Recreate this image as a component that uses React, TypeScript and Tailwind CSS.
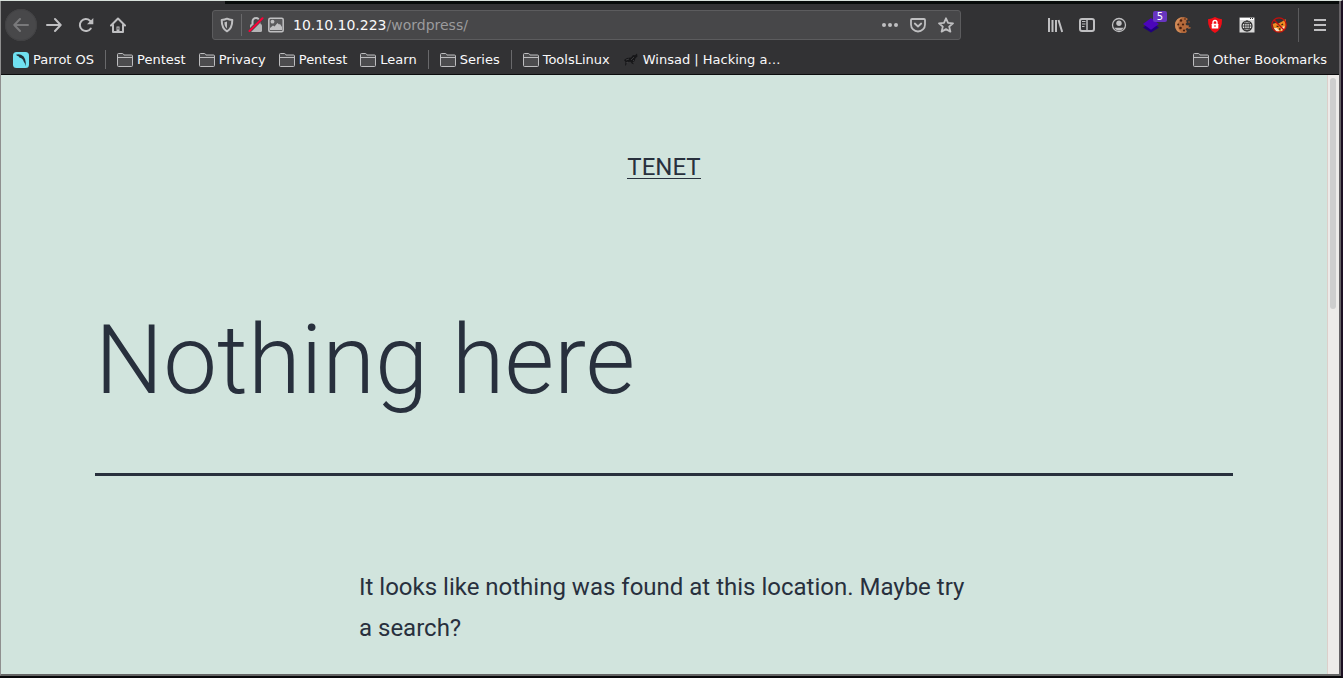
import React from "react";

const stroke = {
  fill: "none",
  stroke: "#bfbfc1",
  strokeWidth: 2,
  strokeLinecap: "round" as const,
  strokeLinejoin: "round" as const,
};

function Icon({ children }: { children: React.ReactNode }) {
  return (
    <svg viewBox="0 0 16 16" className="block size-4 shrink-0" aria-hidden="true">
      {children}
    </svg>
  );
}

function ToolButton({ label, className = "", children }: { label: string; className?: string; children: React.ReactNode }) {
  return (
    <button type="button" aria-label={label} className={`relative flex size-8 shrink-0 items-center justify-center ${className}`}>
      {children}
    </button>
  );
}

function FolderIcon() {
  return (
    <Icon>
      <path
        d="M.5 2.500q0-1 1-1h4q.7 0 1 .7l.4.8h7.600q1 0 1 1v9.500q0 1-1 1H1.500q-1 0-1-1z"
        fill="#4c4c4e"
        stroke="#bdbdbf"
      />
      <path d="M.5 5.500h15" stroke="#bdbdbf" />
    </Icon>
  );
}

function ParrotIcon() {
  return (
    <Icon>
      <rect width="16" height="16" rx="3.500" fill="#6fe0f0" />
      <path
        d="M3 2.800l2.200-.6 2.800.6 2.600 1.700 1.500 2.800.6 3 .1 4-.9-2.800-1.200-2-.7-1.700-2-1.700-1.300-.4-1.200-1.500-1.400-.5z"
        fill="#213038"
      />
    </Icon>
  );
}

function HorseIcon() {
  return (
    <Icon>
      <path d="M1 8l3-2 4-.5 2-2.500 2 .2 2-1.700.5 3-2 1.800-1 3-2 1 1.500 2-2-.5-1.500-2-3 .2L3 13l-1 1 .5-4z" fill="#161618" />
      <path d="M3 8l3-1M8 8l3-3M5 10l-2 1M10 9l1-1" stroke="#4a4a4c" strokeWidth=".7" />
    </Icon>
  );
}

function Bookmark({ label, icon = <FolderIcon /> }: { label: string; icon?: React.ReactNode }) {
  return (
    <a href="#" className="flex items-center gap-1 px-[5px] whitespace-nowrap">
      {icon}
      <span>{label}</span>
    </a>
  );
}

function Separator() {
  return <span className="mx-[3px] h-[19px] w-px bg-[#69696b]" />;
}

function AddressBar() {
  return (
    <div className="mx-[78px] flex h-[30px] min-w-0 flex-1 items-center rounded-[3px] border border-[#5c5c5e] bg-[#474749] px-1.5">
      <button type="button" aria-label="Tracking protection">
        <Icon>
          <path d="M8 1.700c1.900 1 3.700 1.200 5.300 1.300 0 6-1.500 9.300-5.300 11.300C4.200 12.300 2.700 9 2.700 3 4.300 2.900 6.100 2.700 8 1.700z" {...stroke} />
          <path d="M8 4.500v7C6.200 10 5.400 8 5.400 5.200 6.300 5.100 7.200 4.900 8 4.500z" fill="#bfbfc1" />
        </Icon>
      </button>
      <span className="ml-1.5 h-[22px] w-px bg-[#69696b]" />
      <button type="button" aria-label="Connection not secure" className="ml-1.5">
        <Icon>
          <path d="M4.500 7V4.500a3.500 3.500 0 0 1 7 0V7" {...stroke} />
          <rect x="2" y="7" width="12" height="8" rx="1.500" fill="#b4b4b6" />
          <path d="M1 14.500L14.500 1" stroke="#474749" strokeWidth="3.500" />
          <path d="M1.500 14L14.500 1.300" stroke="#ff0039" strokeWidth="2" strokeLinecap="round" />
        </Icon>
      </button>
      <button type="button" aria-label="Image permissions" className="ml-1">
        <Icon>
          <rect x=".8" y="1.300" width="14.400" height="13.400" rx="1.500" fill="#5a5a5c" stroke="#bfbfc1" strokeWidth="1.500" />
          <circle cx="4.500" cy="4.700" r="1.900" fill="#bfbfc1" />
          <path d="M2 13V11l3-2.500 1.500 1L9.500 6l1.500 1.500L12 7l2 3v3z" fill="#bfbfc1" />
        </Icon>
      </button>
      <label className="ml-[9px] flex min-w-0 flex-1 items-center text-sm text-[#9b9b9d]">
        <input
          type="text"
          aria-label="Address"
          defaultValue="10.10.10.223"
          className="field-sizing-content bg-transparent text-[#f9f9fa] outline-none"
        />
        <span>/wordpress/</span>
      </label>
      <div className="flex gap-3">
        <button type="button" aria-label="Page actions">
          <Icon>
            <circle cx="2" cy="8" r="2" fill="#bfbfc1" />
            <circle cx="8" cy="8" r="2" fill="#bfbfc1" />
            <circle cx="14" cy="8" r="2" fill="#bfbfc1" />
          </Icon>
        </button>
        <button type="button" aria-label="Save to Pocket">
          <Icon>
            <path d="M2 2h12q1 0 1 1v4.500a7 7 0 0 1-14 0V3q0-1 1-1zM4.800 6.500L8 9.500l3.200-3" {...stroke} strokeWidth="1.800" />
          </Icon>
        </button>
        <button type="button" aria-label="Bookmark this page">
          <Icon>
            <path d="M8 1.300l2 4.500 5 .5-3.800 3.300 1.200 5L8 12.100l-4.400 2.500 1.200-5L1 6.300l5-.5z" {...stroke} strokeWidth="1.800" />
          </Icon>
        </button>
      </div>
    </div>
  );
}

function NavigationBar() {
  return (
    <nav aria-label="Navigation" className="flex h-10 items-center pr-[3px] pl-1">
      <ToolButton label="Back" className="mr-px rounded-full bg-[#48484a] ring-1 ring-[#424244] ring-inset">
        <Icon>
          <path d="M15 8H1.500M7 2L1.300 8 7 14" {...stroke} stroke="#79797b" />
        </Icon>
      </ToolButton>
      <ToolButton label="Forward">
        <Icon>
          <path d="M1 8h13.500M9 2l5.700 6L9 14" {...stroke} />
        </Icon>
      </ToolButton>
      <ToolButton label="Reload">
        <Icon>
          <path d="M12.800 11.500A6 6 0 1 1 12 3.700L13.500 5.500" {...stroke} />
          <path d="M15.300 1v6.200H9z" fill="#bfbfc1" />
        </Icon>
      </ToolButton>
      <ToolButton label="Home">
        <Icon>
          <path d="M1 8.500L8 1.500l7 7M3 8v7h10V8" {...stroke} />
          <path d="M6.500 14.500V9.500h3v5z" fill="#bfbfc1" />
          <path d="M8 10.500v2" stroke="#323234" />
        </Icon>
      </ToolButton>

      <AddressBar />

      <ToolButton label="Library">
        <Icon>
          <path d="M2 1v14M5.500 3v12M9 3v12M11.500 3l3.700 12" {...stroke} strokeLinecap="butt" />
        </Icon>
      </ToolButton>
      <ToolButton label="Sidebars">
        <Icon>
          <rect x="1" y="2" width="14" height="12" rx="2" {...stroke} />
          <path d="M8 2v12" stroke="#bfbfc1" strokeWidth="1.500" />
          <path d="M3 4.500h3.500M3 7h3.500M3 9.500h2.500" stroke="#bfbfc1" />
        </Icon>
      </ToolButton>
      <ToolButton label="Account">
        <Icon>
          <circle cx="8" cy="8" r="6.500" {...stroke} strokeWidth="1.300" />
          <circle cx="8" cy="6.300" r="2.700" fill="#bfbfc1" />
          <path d="M3.200 10.800h9.600Q11 13.500 8 13.500t-4.800-2.700z" fill="#bfbfc1" />
        </Icon>
      </ToolButton>
      <ToolButton label="Layers, 5 items">
        <Icon>
          <path d="M0 10.500L8 5l8 5.500L8 15.500z" fill="#20007c" />
          <path d="M0 7l8-6 8 6-8 5.800z" fill="#4b05bb" />
        </Icon>
        <span className="absolute top-[2px] right-0 flex h-[11px] w-3.5 items-center justify-center rounded-[2px] bg-[#6735c0] text-[10px] leading-none text-white">
          5
        </span>
      </ToolButton>
      <ToolButton label="Cookies">
        <Icon>
          <path
            d="M8.500 0q3 .3 4.500 2L10.800 4l1.200 1-1.500 2 1 1.200 2.500.3-.5 2 2-.5 0 1.500-2 .3-1.500-1-1.500 1.700 1.500 1.500-1 1.700Q9.500 16 8 16 0 15.500 0 8 .5.500 8.500 0z"
            fill="#b66a3b"
          />
          <path d="M8 0Q.5.500 0 8q0 7 7 8Q2 12 3 7T8 0z" fill="#d08a57" />
          <g fill="#46200f">
            <circle cx="6" cy="3.500" r="1.200" />
            <circle cx="3.200" cy="7.500" r="1" />
            <circle cx="8" cy="7.500" r="1.100" />
            <circle cx="5.500" cy="11" r="1.300" />
            <circle cx="9" cy="13.500" r="1.100" />
            <circle cx="10" cy="2" r=".8" />
          </g>
          <path d="M13.500 4l1.500.5-.5 1.500-1.500-.5z" fill="#8a4c28" />
        </Icon>
      </ToolButton>
      <ToolButton label="Blocker">
        <Icon>
          <path d="M8 0q3.500 2 7 2.200Q15.500 12 8 16 .5 12 1 2.200 4.500 2 8 0z" fill="#f00d16" />
          <path d="M6 7V5.500a2 2 0 0 1 4 0V7" fill="none" stroke="#fff" strokeWidth="1.300" />
          <rect x="4.700" y="6.800" width="6.600" height="4.700" rx=".5" fill="#fff" />
          <path d="M8 8v2" stroke="#f00d16" />
        </Icon>
      </ToolButton>
      <ToolButton label="Proxy">
        <Icon>
          <path d="M.5.500h15v15H.5z" fill="#d9d9d9" />
          <path d="M1 2h14" stroke="#fff" strokeWidth="2" />
          <path d="M11 1.500h1M13 1.500h1" stroke="#333" />
          <circle cx="8" cy="9" r="5" fill="#e8e8e8" stroke="#303030" strokeWidth="1.200" />
          <ellipse cx="8" cy="9" rx="2.300" ry="5" fill="none" stroke="#303030" />
          <path d="M3 9h10M4 6.500h8M4 11.500h8M8 4v10" stroke="#303030" strokeWidth=".8" />
        </Icon>
      </ToolButton>
      <ToolButton label="Fox, disabled">
        <Icon>
          <path d="M1.500 7l3-1 3 .5L12 4l2.500-2 .5 4-.5 5-3.500 3.500-5 .5-3-3z" fill="#ef8b22" />
          <path d="M3 11l3 0 2.500 3-3 1zM10 10.500l3.500-1.500-.5 3-2.500 2z" fill="#f8e3c6" />
          <path d="M5.500 9l2 .7M10.500 8l1.500-1M8 12h1.500" stroke="#3a2410" strokeWidth="1.300" />
          <circle cx="8" cy="8" r="7.200" fill="none" stroke="#c3100d" strokeWidth="1.200" />
          <path d="M3 3l10 10" stroke="#c3100d" strokeWidth="1.400" />
        </Icon>
      </ToolButton>
      <span className="mr-[5px] ml-[3px] h-[34px] w-px bg-[#5b5b5d]" />
      <ToolButton label="Open menu">
        <Icon>
          <path d="M2 3h12M2 8h12M2 13h12" {...stroke} strokeLinecap="butt" />
        </Icon>
      </ToolButton>
    </nav>
  );
}

function BookmarksBar() {
  return (
    <nav aria-label="Bookmarks" className="flex h-[29px] items-center gap-[3px] px-[7px] text-[13px]">
      <Bookmark label="Parrot OS" icon={<ParrotIcon />} />
      <Separator />
      <Bookmark label="Pentest" />
      <Bookmark label="Privacy" />
      <Bookmark label="Pentest" />
      <Bookmark label="Learn" />
      <Separator />
      <Bookmark label="Series" />
      <Separator />
      <Bookmark label="ToolsLinux" />
      <Bookmark label="Winsad | Hacking a…" icon={<HorseIcon />} />
      <span className="flex-1" />
      <Bookmark label="Other Bookmarks" />
    </nav>
  );
}

function Page() {
  return (
    <div className="min-w-0 flex-1 overflow-hidden bg-[#d1e4dd] px-[94px] font-[Roboto,sans-serif] text-[#28303d]">
      <header className="flex justify-center pt-[82px]">
        <a href="#" className="border-b border-[#28303d] text-2xl leading-[21px]">
          TENET
        </a>
      </header>
      <main>
        <h1 className="border-b-[3px] border-[#28303d] pt-[116px] pb-[48px] text-[96px] leading-[130px] font-light">
          Nothing here
        </h1>
        <p className="mx-auto max-w-[610px] pt-[91px] text-2xl leading-[41px]">
          It looks like nothing was found at this location. Maybe try a search?
        </p>
      </main>
    </div>
  );
}

export default function App() {
  return (
    <div className="h-screen border-t border-r-2 border-b-2 border-t-[#d9e2dc] border-r-[#1c1022] border-b-[#08080a]">
      <div className="flex h-full flex-col border-r-2 border-b-2 border-l border-r-[#656265] border-b-[#656565] border-l-[#8f8f8f]">
        <header className="shrink-0 border-b border-[#0c0c0d] bg-[#323234] font-['DejaVu_Sans',sans-serif] text-[#f9f9fa]">
          <div className="flex h-1">
            <span className="ml-[224px] h-[3px] flex-1 bg-[#080c0b]" />
          </div>
          <NavigationBar />
          <BookmarksBar />
        </header>
        <div className="flex min-h-0 flex-1">
          <Page />
          <div className="w-3 shrink-0 border-l border-[#dccfca] bg-[#edebe9] pt-[3px] pl-0.5">
            <div className="h-[231px] w-1.5 rounded-full bg-[#cecece]" />
          </div>
        </div>
      </div>
    </div>
  );
}
